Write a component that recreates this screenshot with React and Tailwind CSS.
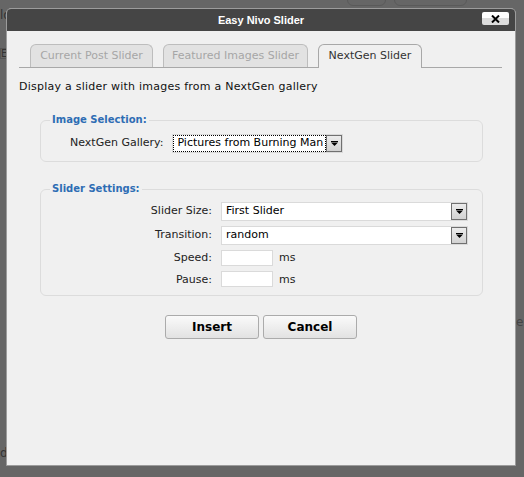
import React from 'react';

const body = "font-['DejaVu_Sans','Verdana',sans-serif]";

const Arrow = () => (
  <span className="w-[16px] self-stretch flex items-center justify-center border border-[#707070] bg-gradient-to-b from-[#ececec] to-[#d2d2d2]">
    <svg width="7" height="5" viewBox="0 0 7 5">
      <rect x="0" y="0" width="7" height="1" fill="#000" />
      <path d="M0 1.5 H7 L3.5 5 Z" fill="#000" />
    </svg>
  </span>
);

const Select = ({ value, className, focused }) => (
  <div className={`flex bg-white border border-[#dadada] ${className}`}>
    <span
      className={`flex-1 flex items-center pl-[4px] text-[11px] text-black ${
        focused ? 'outline outline-1 outline-dotted outline-black -outline-offset-1' : ''
      }`}
    >
      {value}
    </span>
    <Arrow />
  </div>
);

const Row = ({ label, children }) => (
  <div className="flex items-center">
    <span className="w-[180px] shrink-0 pr-[9px] text-right text-[11px] text-[#222]">{label}</span>
    {children}
  </div>
);

const Tab = ({ label, width, active }) =>
  active ? (
    <div
      className={`${width} h-[24px] -mb-px flex items-center justify-center rounded-t-[6px] border border-b-0 border-[#a8a8a8] bg-[#f0f0f0] text-[11px] text-[#333]`}
    >
      {label}
    </div>
  ) : (
    <div
      className={`${width} h-[23px] flex items-center justify-center rounded-t-[6px] border border-b-0 border-[#bdbdbd] bg-[#e2e2e2] text-[11px] text-[#a6a6a6]`}
    >
      {label}
    </div>
  );

export default function App() {
  return (
    <div className={`relative w-[524px] h-[477px] overflow-hidden bg-[#666] pt-[8px] pl-[6px] ${body}`}>
      {/* page behind the overlay */}
      <span className="absolute left-0 top-[6px] text-[12px] text-[#333]">ld</span>
      <span className="absolute left-0 top-[48px] w-[8px] h-[11px] border border-[#555] text-[10px] leading-[9px] text-[#333]">E</span>
      <span className="absolute left-0 top-[444px] text-[12px] text-[#333]">d</span>
      <span className="absolute left-[516px] top-[313px] text-[12px] text-[#444]">e</span>
      <span className="absolute left-[347px] top-[-8px] w-[39px] h-[14px] rounded-[6px] border border-[#5a5a5a]" />
      <span className="absolute left-[394px] top-[-8px] w-[73px] h-[14px] rounded-[6px] border border-[#5a5a5a]" />

      <div className="relative w-[510px] h-[458px] flex flex-col rounded-t-[5px] border border-[#9c9c9c] bg-[#f0f0f0] overflow-hidden">
        <div className="relative h-[22px] shrink-0 flex items-center justify-center bg-[#454545]">
          <span className="font-['Liberation_Sans',sans-serif] text-[11px] font-bold text-white">
            Easy Nivo Slider
          </span>
          <button className="absolute right-[6px] top-[3px] w-[27px] h-[13px] flex items-center justify-center rounded-[2px] bg-gradient-to-b from-white from-50% to-[#dcdcdc] to-50%">
            <svg width="9" height="8" viewBox="0 0 9 8">
              <path d="M1 0.5 L8 7.5 M8 0.5 L1 7.5" stroke="#000" strokeWidth="2" />
            </svg>
          </button>
        </div>

        <div className="pt-[13px]">
          <div className="ml-[12px] w-[483px] h-[24px] flex items-end gap-[10px] pl-[11px] border-b border-[#a8a8a8]">
            <Tab label="Current Post Slider" width="w-[123px]" />
            <Tab label="Featured Images Slider" width="w-[145px]" />
            <Tab label="NextGen Slider" width="w-[104px]" active />
          </div>

          <p className="ml-[12px] mt-[12px] text-[11px] leading-[14px] tracking-[0.24px] text-[#111]">
            Display a slider with images from a NextGen gallery
          </p>

          <fieldset className="ml-[33px] mt-[19px] w-[443px] rounded-[6px] border border-[#dcdcdc] pb-[8px] pt-[7px]">
            <legend className="ml-[9px] px-[2px] text-[10px] leading-[14px] font-bold text-[#2e6db4]">
              Image Selection:
            </legend>
            <div className="flex items-center">
              <span className="pl-[29px] pr-[9px] text-[11px] text-[#222]">NextGen Gallery:</span>
              <Select value="Pictures from Burning Man" className="w-[171px] h-[19px]" focused />
            </div>
          </fieldset>

          <fieldset className="ml-[33px] mt-[20px] w-[443px] rounded-[6px] border border-[#dcdcdc] pb-[7px] pt-[6px]">
            <legend className="ml-[9px] px-[2px] text-[10px] leading-[14px] font-bold text-[#2e6db4]">
              Slider Settings:
            </legend>
            <div className="flex flex-col gap-[5px]">
              <Row label="Slider Size:">
                <Select value="First Slider" className="w-[247px] h-[19px]" />
              </Row>
              <Row label="Transition:">
                <Select value="random" className="w-[247px] h-[19px]" />
              </Row>
              <Row label="Speed:">
                <span className="w-[52px] h-[16px] bg-white border border-[#dadada]" />
                <span className="ml-[6px] text-[11px] text-[#222]">ms</span>
              </Row>
              <Row label="Pause:">
                <span className="-mt-px w-[52px] h-[16px] bg-white border border-[#dadada]" />
                <span className="ml-[6px] text-[11px] text-[#222]">ms</span>
              </Row>
            </div>
          </fieldset>

          <div className="mt-[19px] flex justify-center gap-[4px]">
            <button className="w-[94px] h-[24px] rounded-[3px] border border-[#ababab] bg-gradient-to-b from-[#fafafa] to-[#e2e2e2] text-[12px] font-bold text-black">
              Insert
            </button>
            <button className="w-[94px] h-[24px] rounded-[3px] border border-[#ababab] bg-gradient-to-b from-[#fafafa] to-[#e2e2e2] text-[12px] font-bold text-black">
              Cancel
            </button>
          </div>
        </div>
      </div>
    </div>
  );
}
